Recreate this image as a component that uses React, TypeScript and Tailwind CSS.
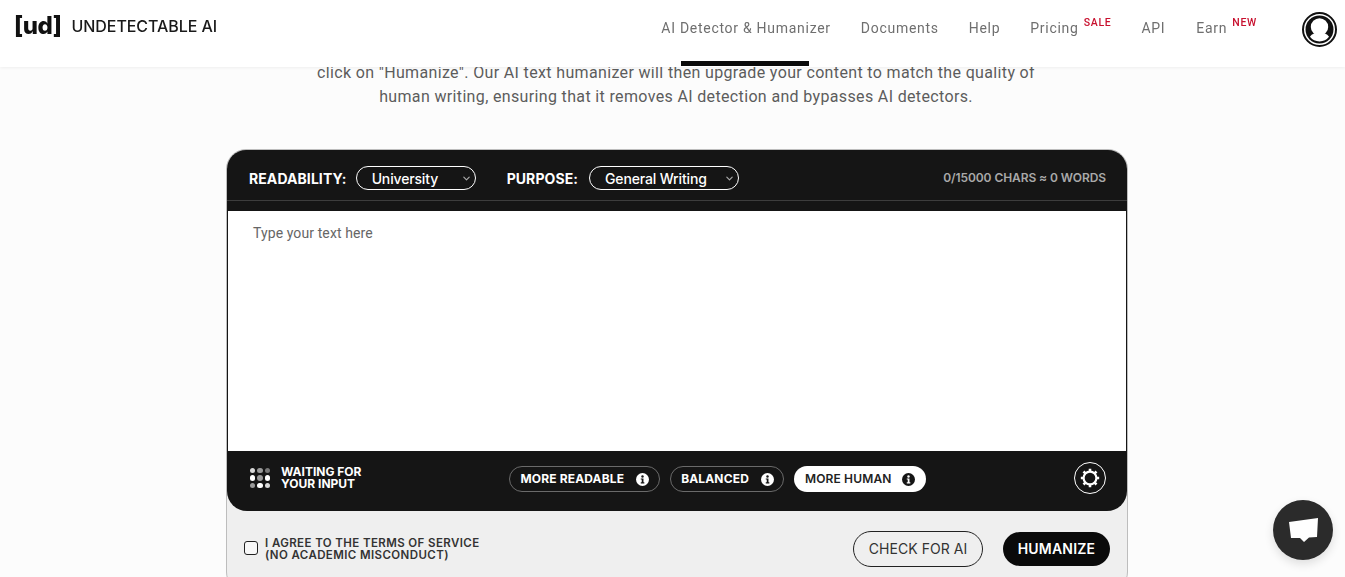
const NAV = [
  { label: 'AI Detector & Humanizer' },
  { label: 'Documents' },
  { label: 'Help' },
  { label: 'Pricing', tag: 'SALE' },
  { label: 'API' },
  { label: 'Earn', tag: 'NEW' },
];

function InfoDot({ dark = false }: { dark?: boolean }) {
  return (
    <span className={`flex h-[13px] w-[13px] items-center justify-center rounded-full ${dark ? 'ml-[10px] bg-[#151515]' : 'ml-[12px] bg-white'}`}>
      <svg viewBox="0 0 12 12" className="h-[13px] w-[13px]" fill={dark ? '#fff' : '#151515'}>
        <circle cx="6" cy="3.2" r="1.15" />
        <path d="M4.4 5h2.5v3.6h.8v1H4.4v-1h.9V6h-.9z" />
      </svg>
    </span>
  );
}

function Chevron() {
  return (
    <svg viewBox="0 0 10 10" className="h-[9px] w-[9px]" fill="none" stroke="#aaa" strokeWidth="1.3" strokeLinecap="round" strokeLinejoin="round">
      <path d="M2 3.5 5 6.5 8 3.5" />
    </svg>
  );
}

function Select({ label, width }: { label: string; width: string }) {
  return (
    <div className={`flex h-6 items-center justify-between rounded-full border border-white pl-[15px] pr-[4px] text-[14px] font-medium tracking-[-0.15px] text-white ${width}`}>
      <span>{label}</span>
      <Chevron />
    </div>
  );
}

function Gear() {
  return (
    <svg viewBox="0 0 24 24" className="h-[22px] w-[22px]" fill="none" stroke="#fff">
      <circle cx="12" cy="12" r="7" strokeWidth="2.4" />
      <path
        d="M12 2v3M12 19v3M2 12h3M19 12h3M4.9 4.9 7 7M17 17l2.1 2.1M4.9 19.1 7 17M17 7l2.1-2.1"
        strokeWidth="2.8"
      />
    </svg>
  );
}

const DOT_SHADES = ['bg-[#d8d8d8]', 'bg-[#999]', 'bg-[#777]', 'bg-white', 'bg-[#999]', 'bg-white', 'bg-[#999]', 'bg-white', 'bg-[#d8d8d8]'];

export default function App() {
  return (
    <div className="h-[577px] overflow-hidden bg-[#fcfcfc] font-['Inter',sans-serif]">
      <header className="fixed inset-x-0 top-0 z-10 flex h-[67px] items-center justify-between bg-white pl-[14px] pr-[8px] shadow-[0_1px_3px_rgba(0,0,0,0.06)]">
        <div className="mb-[16px] flex items-center">
          <span className="text-[24px] font-extrabold leading-none tracking-[-0.5px] text-[#111]">[ud]</span>
          <span className="ml-[10px] text-[16px] font-medium leading-none tracking-[-0.07px] text-[#1a1a1a]">UNDETECTABLE AI</span>
        </div>
        <nav className="flex h-full items-center">
          {NAV.map((item, i) => (
            <div
              key={item.label}
              className={`relative mb-[11px] flex items-center whitespace-nowrap font-['Roboto',sans-serif] text-[14px] tracking-[0.72px] text-[#6f6f6f] ${
                i === 5 ? 'mr-[45px]' : i === 4 ? 'mr-[31px]' : 'mr-[30px]'
              }`}
            >
              {item.label}
              {i === 0 && <span className="absolute left-[20px] top-[43px] h-[5px] w-[128px] bg-[#0a0a0a]" />}
              {item.tag && (
                <span className="mb-[10px] ml-[5px] text-[10.5px] font-medium tracking-[0.7px] text-[#c8102e]">{item.tag}</span>
              )}
            </div>
          ))}
          <div className="mb-[8px] flex h-[35px] w-[35px] items-center justify-center rounded-full border-[2px] border-[#111] bg-white">
            <svg viewBox="0 0 28 28" className="h-[29px] w-[29px]">
              <circle cx="14" cy="14" r="13.5" fill="#111" />
              <circle cx="14" cy="11.5" r="8.4" fill="#fff" />
              <path d="M4.8 21c2-3 5-3.6 6.5-3.6h5.4c1.5 0 4.5.6 6.500 3.600A11.500 11.500 0 0 1 14 25.500 11.500 11.500 0 0 1 4.800 21z" fill="#fff" />
            </svg>
          </div>
        </nav>
      </header>

      <main className="pt-[61px]">
        <p className="ml-[276px] w-[800px] text-center font-['Roboto',sans-serif] text-[16px] leading-[24px] tracking-[0.35px] text-[#5c5c5c]">
          click on "Humanize". Our AI text humanizer will then upgrade your content to match the quality of
          <br />
          human writing, ensuring that it removes AI detection and bypasses AI detectors.
        </p>

        <section className="ml-[226px] mt-[40px] w-[902px] overflow-hidden rounded-[20px] border border-[#bdbdbd] bg-[#efefef]">
          <div className="bg-[#151515]">
            <div className="flex h-[51px] items-center justify-between border-b border-[#3d3d3d] pl-[22px] pr-[21px] pt-[6px]">
              <div className="flex items-center text-[14px] font-bold tracking-[0.08px] text-white">
                <span>READABILITY:</span>
                <span className="ml-[9px]"><Select label="University" width="w-[120px]" /></span>
                <span className="ml-[31px]">PURPOSE:</span>
                <span className="ml-[11px]"><Select label="General Writing" width="w-[150px]" /></span>
              </div>
              <span className="text-[12px] font-semibold tracking-[-0.08px] text-[#a9a9a9]">0/15000 CHARS ≈ 0 WORDS</span>
            </div>
            <div className="h-[10px]" />
          </div>

          <div className="h-[240px] border-x border-[#151515] bg-white pl-[25px] pt-[14px] font-['Roboto',sans-serif] text-[14px] leading-[17px] tracking-[0.1px] text-[#666]">
            Type your text here
          </div>

          <div className="flex h-[60px] items-center rounded-b-[20px] bg-[#151515] pb-[4px] pl-[23px] pr-[21px]">
            <div className="mb-[2px] grid h-[20px] w-[20px] grid-cols-3 gap-[2px]">
              {DOT_SHADES.map((shade, i) => (
                <span key={i} className={`h-[5.300px] w-[5.300px] rounded-full ${shade}`} />
              ))}
            </div>
            <div className="mb-[2px] ml-[11px] text-[12px] font-bold leading-[12px] text-white">
              WAITING FOR
              <br />
              YOUR INPUT
            </div>
            <div className="ml-[148px] flex items-center gap-[10px] text-[12px] font-bold tracking-[0.15px]">
              <div className="flex h-[26px] items-center rounded-full border border-[#6a6a6a] pl-[10px] pr-[10px] text-white">
                MORE READABLE
                <InfoDot />
              </div>
              <div className="flex h-[26px] items-center rounded-full border border-[#6a6a6a] pl-[10px] pr-[9px] text-white">
                BALANCED
                <InfoDot />
              </div>
              <div className="flex h-[26px] items-center rounded-full bg-white pl-[11px] pr-[11px] font-semibold text-[#222]">
                MORE HUMAN
                <InfoDot dark />
              </div>
            </div>
            <div className="mb-[2px] ml-auto flex h-8 w-8 items-center justify-center rounded-full border border-white">
              <Gear />
            </div>
          </div>

          <div className="flex h-[80px] items-start justify-between pl-[17px] pr-[17px] pt-[20px]">
            <div className="mt-[6px] flex items-center">
              <span className="mb-[2px] h-[14px] w-[14px] rounded-[3px] border-[1.500px] border-[#222] bg-[#f8f8f8]" />
              <span className="ml-[7px] text-[11.500px] font-semibold leading-[12px] tracking-[0.4px] text-[#333]">
                I AGREE TO THE TERMS OF SERVICE
                <br />
                (NO ACADEMIC MISCONDUCT)
              </span>
            </div>
            <div className="flex items-center">
              <button className="h-[36px] w-[130px] rounded-full border border-[#222] pb-[2px] text-[14px] tracking-[0.05px] text-[#333]">CHECK FOR AI</button>
              <button className="ml-[20px] h-[34px] w-[107px] rounded-full bg-[#0a0a0a] pb-[2px] text-[14px] font-semibold tracking-[0.2px] text-white">HUMANIZE</button>
            </div>
          </div>
        </section>
      </main>

      <div className="fixed left-[1273px] top-[500px] z-10 flex h-[60px] w-[60px] items-center justify-center rounded-full bg-[#2b2b2b] shadow-[0_4px_10px_rgba(0,0,0,0.12)]">
        <svg viewBox="0 0 29 24" className="h-[24px] w-[29px]" fill="#fff">
          <path d="M0 4 29 0 28 19 20 19.500 15 24 11 20 2 20z" />
        </svg>
      </div>
    </div>
  );
}
